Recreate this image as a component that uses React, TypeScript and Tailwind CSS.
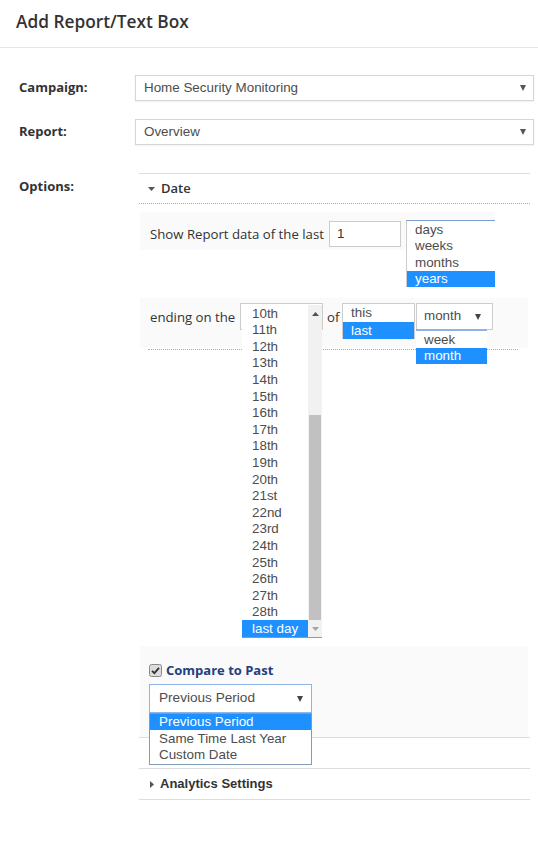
import React from "react";

const open = "font-['Open_Sans',sans-serif]";
const arial = "font-['Liberation_Sans',Arial,sans-serif]";
const blue = "bg-[#1e90ff] text-white";

function Caret({ w = 7, h = 5, color = "#555" }: { w?: number; h?: number; color?: string }) {
  return (
    <svg width={w} height={h} viewBox={`0 0 ${w} ${h}`}>
      <path d={`M0 0H${w}L${w / 2} ${h}Z`} fill={color} />
    </svg>
  );
}

function Select({ value }: { value: string }) {
  return (
    <div className="flex-1 h-[26px] flex items-center justify-between pl-[8px] pr-[7px] bg-white border border-[#d6d6d6] shadow-[0_1px_2px_rgba(0,0,0,0.06)]">
      <span className={`${arial} text-[13.4px] text-[#4d4d4d]`}>{value}</span>
      <Caret w={6} h={6} />
    </div>
  );
}

function Opt({ label, selected, h = "h-[16.6px]", pl = "pl-[8px]" }: { label: string; selected?: boolean; h?: string; pl?: string }) {
  return (
    <div className={`${h} ${pl} flex items-center ${arial} text-[13.4px] leading-none ${selected ? blue : "text-[#4d4d4d]"}`}>
      {label}
    </div>
  );
}

const dayOptions = ["10th", "11th", "12th", "13th", "14th", "15th", "16th", "17th", "18th", "19th", "20th", "21st", "22nd", "23rd", "24th", "25th", "26th", "27th", "28th"];

export default function App() {
  return (
    <div className={`w-[538px] h-[846px] bg-white text-[#333] text-[13px] ${open}`}>
      <div className="h-[48px] border-b border-[#e6e6e6] pl-[16px] pt-[9px] text-[17.3px] font-semibold leading-[26px] text-[#333]">
        Add Report/Text Box
      </div>

      <div className="pl-[19px] pr-[4px] pt-[27px]">
        <div className="flex items-center h-[26px]">
          <div className="w-[116px] font-bold text-[#333]">Campaign:</div>
          <Select value="Home Security Monitoring" />
        </div>
        <div className="flex items-center h-[26px] mt-[18px]">
          <div className="w-[116px] font-bold text-[#333]">Report:</div>
          <Select value="Overview" />
        </div>

        <div className="flex items-start mt-[28px]">
          <div className="w-[116px] font-bold leading-[26px] text-[#333]">Options:</div>
          <div className="ml-[4px] w-[391px] border-t border-[#ddd]">
            {/* Date section */}
            <div className="h-[30px] flex items-center pl-[9px] border-b border-dotted border-[#aaa]">
              <Caret w={7} h={4} />
              <span className="ml-[6px] font-semibold text-[#333]">Date</span>
            </div>

            <div className="mt-[8px] ml-[1px] w-[355px] h-[38px] bg-[#fafafa] flex items-start pl-[10px] pt-[9px]">
              <span className="w-[179px] leading-[26px] text-[13.2px] text-[#333]">Show Report data of the last</span>
              <div className={`w-[72px] h-[26px] bg-white border border-[#ccc] flex items-center pl-[7px] ${arial} text-[13.4px] text-[#333]`}>1</div>
              <div className="relative ml-[5px] w-[89px] h-[26px]">
                <div className="absolute left-0 top-[-1px] w-[89px] bg-white border-t border-[#7a9cd3] border-l border-l-[#ccc]">
                  <Opt label="days" />
                  <Opt label="weeks" />
                  <Opt label="months" />
                  <Opt label="years" selected />
                </div>
              </div>
            </div>

            <div className="mt-[48px] ml-[1px] w-[388px] h-[50px] bg-[#fafafa] flex items-start pl-[10px] pt-[5px]">
              <span className="w-[90px] leading-[26px] mt-[1px] text-[13.2px] text-[#333]">ending on the</span>
              <div className="relative w-[83px] h-[27px] bg-white border border-[#ccc]">
                <div className="absolute left-[1px] top-[1px] w-[80px] bg-white border-b border-[#7a9cd3] flex">
                  <div className="w-[66px]">
                    {dayOptions.map((d) => (
                      <Opt key={d} label={d} pl="pl-[10px]" />
                    ))}
                    <Opt label="last day" selected pl="pl-[10px]" />
                  </div>
                  <div className="w-[14px] bg-[#f1f1f1] flex flex-col items-center">
                    <div className="h-[17px] flex items-center">
                      <svg width="7" height="4" viewBox="0 0 7 4"><path d="M0 4H7L3.5 0Z" fill="#505050" /></svg>
                    </div>
                    <div className="mt-[93px] w-[12px] h-[205px] bg-[#c1c1c1]" />
                    <div className="h-[17px] flex items-center">
                      <Caret w={7} h={4} color="#a3a3a3" />
                    </div>
                  </div>
                </div>
              </div>
              <span className="ml-[4px] w-[15px] leading-[26px] mt-[1px] text-[13.2px] text-[#333]">of</span>
              <div className="w-[73px] h-[36px] bg-white border border-[#ccc] border-b-0">
                <Opt label="this" h="h-[18px]" />
                <Opt label="last" selected h="h-[17px]" />
              </div>
              <div className="relative ml-[1px] w-[77px] h-[27px] bg-white border border-[#ccc] flex items-center justify-between pl-[7px] pr-[11px]">
                <span className={`${arial} text-[13.4px] text-[#4d4d4d]`}>month</span>
                <Caret w={6} h={6} color="#444" />
                <div className="absolute left-[-1px] top-[25px] w-[71px] bg-white border-t-2 border-[#8fb1e3]">
                  <Opt label="week" />
                  <Opt label="month" selected />
                </div>
              </div>
            </div>
            <div className="mt-[1px] ml-[9px] w-[370px] border-t border-dotted border-[#aaa]" />

            {/* Compare */}
            <div className="mt-[296px] ml-[1px] w-[388px] h-[91px] bg-[#fafafa] pl-[9px] pt-[18px]">
              <div className="flex items-center h-[13px]">
                <svg width="13" height="13" viewBox="0 0 13 13">
                  <rect x="0.5" y="0.5" width="12" height="12" rx="2" fill="#dcdcdc" stroke="#8a8a8a" />
                  <path d="M3 6.8L5.4 9.2L10 3.8" fill="none" stroke="#333" strokeWidth="1.8" />
                </svg>
                <span className="ml-[4px] font-bold text-[#21407f]">Compare to Past</span>
              </div>
              <div className="relative mt-[7px] w-[163px] h-[29px] bg-white border border-[#8fb4ea] flex items-center justify-between pl-[9px] pr-[8px]">
                <span className={`${arial} text-[13.6px] text-[#4d4d4d]`}>Previous Period</span>
                <Caret w={6} h={6} color="#444" />
                <div className="absolute left-[-1px] top-[28px] w-[163px] h-[52px] bg-white border border-[#7f9db9] z-10">
                  <Opt label="Previous Period" selected h="h-[16px]" pl="pl-[9px]" />
                  <Opt label="Same Time Last Year" h="h-[17px]" pl="pl-[9px]" />
                  <Opt label="Custom Date" h="h-[16px]" pl="pl-[9px]" />
                </div>
              </div>
            </div>
            <div className="border-t border-[#ddd] h-[31px]" />
            <div className="border-t border-b border-[#ddd] h-[32px] flex items-center pl-[11px]">
              <svg width="4" height="7" viewBox="0 0 4 7"><path d="M0 0L4 3.5L0 7Z" fill="#555" /></svg>
              <span className={`ml-[6px] ${arial} font-bold text-[13px] text-[#333]`}>Analytics Settings</span>
            </div>
          </div>
        </div>
      </div>
    </div>
  );
}
